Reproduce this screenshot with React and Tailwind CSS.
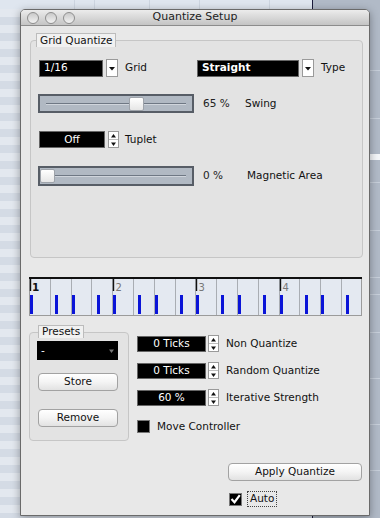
import React from "react";

const font = "font-['DejaVu_Sans','Liberation_Sans',sans-serif]";

function DropBtn() {
  return (
    <div className="w-[12px] h-[18px] bg-white border border-[#9a9a9a] flex items-center justify-center">
      <svg width="6" height="5" viewBox="0 0 6 5"><path d="M0 1h6L3 4.5z" fill="#111" /></svg>
    </div>
  );
}

function Spinner({ h = "h-[17px]" }) {
  return (
    <div className={`w-[11px] ${h} bg-white border border-[#9a9a9a] flex flex-col`}>
      <div className="flex-1 flex items-center justify-center border-b border-[#bdbdbd]">
        <svg width="5" height="4" viewBox="0 0 5 4"><path d="M0 3.5h5L2.5 0z" fill="#111" /></svg>
      </div>
      <div className="flex-1 flex items-center justify-center">
        <svg width="5" height="4" viewBox="0 0 5 4"><path d="M0 0.5h5L2.5 4z" fill="#111" /></svg>
      </div>
    </div>
  );
}

function Slider({ pos, h = "h-[19px]" }) {
  return (
    <div className={`relative w-[156px] ${h} bg-[#b1b9c3] border-2 border-[#575d66] flex items-center`}>
      <div className="mx-[6px] flex-1 h-[2px] border-t border-[#6f7884] border-b border-b-[#d0d5dc]" />
      <div
        className="absolute top-[1px] w-[15px] h-[14px] bg-gradient-to-b from-[#ffffff] to-[#e6e6e6] border border-[#9ea3aa] rounded-[2px]"
        style={{ left: pos }}
      />
    </div>
  );
}

function Field({ w, children, className = "" }) {
  return (
    <div className={`${w} h-[17px] bg-black border border-[#666] text-white text-[10.5px] flex items-center ${className}`}>
      {children}
    </div>
  );
}

function Timeline() {
  const W = 333;
  const step = 20.8;
  const lines = [];
  for (let i = 1; i < 16; i++) {
    const x = Math.round(i * step) + 0.5;
    lines.push(<line key={"g" + i} x1={x} x2={x} y1={1} y2={38} stroke="#a9adb3" strokeWidth="1" />);
  }
  const beats = [0, 4, 8, 12].map((i) => Math.round(i * step) + 1.5);
  const bars = [];
  for (let k = 0; k < 8; k++) {
    const e = Math.round(k * 41.6) + 1;
    bars.push(<rect key={"e" + k} x={e} y={18} width={3} height={19} fill="#0a14d8" />);
    bars.push(<rect key={"o" + k} x={e + 25} y={18} width={3} height={19} fill="#0a14d8" />);
  }
  return (
    <svg width={W} height={39} viewBox={`0 0 ${W} 39`} className="block">
      <rect x="0.5" y="0.5" width={W - 1} height="38" fill="#e4e9f1" stroke="#9b9b9b" />
      {lines}
      <line x1="0" x2={W} y1="1" y2="1" stroke="#111" strokeWidth="2" />
      {beats.map((x, i) => (
        <line key={"b" + i} x1={x} x2={x} y1={0} y2={14} stroke="#111" strokeWidth="1.4" />
      ))}
      <text x="3" y="14" fontSize="10.5" fontWeight="bold" fill="#111" fontFamily="DejaVu Sans">1</text>
      {[2, 3, 4].map((n, i) => (
        <text key={n} x={beats[i + 1] + 2} y="14" fontSize="10" fill="#777" fontFamily="DejaVu Sans">{n}</text>
      ))}
      {bars}
    </svg>
  );
}

function MacButton({ w, children }) {
  return (
    <div className={`${w} h-[18px] rounded-[4px] border border-[#a2a2a2] bg-gradient-to-b from-[#ffffff] via-[#f4f4f4] to-[#e2e2e2] flex items-center justify-center text-[10.5px] text-[#111]`}>
      {children}
    </div>
  );
}

function SpinRow({ value, label }) {
  return (
    <div className="flex items-center h-[17px]">
      <div className="w-[69px] h-[16px] bg-black border border-[#666] text-white text-[10.5px] flex items-center justify-center">{value}</div>
      <div className="ml-[2px]"><Spinner h="h-[17px]" /></div>
      <div className="ml-[7px] text-[10.5px] text-[#111]">{label}</div>
    </div>
  );
}

export default function App() {
  const rightLines = [70, 118, 182, 230, 277, 294, 332, 378, 424, 470];
  return (
    <div className={`relative w-[380px] h-[518px] overflow-hidden ${font}`}>
      {/* desktop background */}
      <div className="absolute inset-0 flex">
        <div className="w-[313px] h-full border-r border-[#1c1c3c] flex flex-col">
          <div className="h-[9px] bg-[#dfe6ef] flex">
            <div className="w-[75px] border-r border-[#cdd5e0]" />
            <div className="w-[20px] border-r border-[#cdd5e0]" />
            <div className="w-[55px] border-r border-[#cdd5e0]" />
            <div className="w-[50px] border-r border-[#cdd5e0]" />
            <div className="w-[70px] border-r border-[#cdd5e0]" />
          </div>
          <div className="flex-1 bg-[repeating-linear-gradient(180deg,#e3e8ef_0px,#e3e8ef_8px,#d4dbe5_8px,#d4dbe5_16px)]" />
        </div>
        <div className="flex-1 h-full bg-[#b1bac7] relative">
          <div className="absolute left-0 right-0 top-[154px] h-[6px] bg-[#f4f6f9]" />
          {rightLines.map((y) => (
            <div key={y} className="absolute left-0 right-0 h-px bg-[#c7cfda]" style={{ top: y }} />
          ))}
        </div>
      </div>

      {/* window */}
      <div className="absolute left-[20px] top-[9px] w-[350px] h-[507px] border border-[#6a6a6a] rounded-t-[5px] bg-[#e8e8e8] shadow-[0_2px_8px_rgba(0,0,0,0.35)] flex flex-col text-[#111]">
        {/* title bar */}
        <div className="relative h-[16px] rounded-t-[4px] bg-gradient-to-b from-[#ececec] to-[#c4c4c4] border-b border-[#8c8c8c] flex items-center">
          <div className="flex items-center gap-[6px] pl-[6px]">
            {[0, 1, 2].map((i) => (
              <div key={i} className="w-[12px] h-[12px] rounded-full border border-[#8e8e8e] bg-gradient-to-b from-[#c9c9c9] to-[#f2f2f2]" />
            ))}
          </div>
          <div className="absolute inset-0 flex items-center justify-center text-[11px] text-[#222]">Quantize Setup</div>
        </div>

        {/* Grid Quantize group */}
        <div className="relative ml-[9px] mt-[14px] w-[333px] h-[218px] border border-[#c6c6c6] rounded-[4px] bg-[#e3e3e3] pl-[8px] pt-[18px]">
          <div className="absolute -top-[8px] left-[5px] px-[3px] h-[14px] bg-[#f1f1f1] border border-[#bcbcbc] border-b-0 flex items-center text-[10.5px]">
            Grid Quantize
          </div>
          {/* row 1 */}
          <div className="flex items-center h-[18px]">
            <div className="w-[158px] flex items-center">
              <Field w="w-[64px]" className="pl-[4px]">1/16</Field>
              <div className="ml-[3px]"><DropBtn /></div>
              <div className="ml-[7px] text-[10.5px]">Grid</div>
            </div>
            <Field w="w-[102px]" className="pl-[4px] font-bold">Straight</Field>
            <div className="ml-[3px]"><DropBtn /></div>
            <div className="ml-[7px] text-[10.5px]">Type</div>
          </div>
          {/* row 2 */}
          <div className="flex items-center mt-[17px] -ml-[1px]">
            <Slider pos={89} />
            <div className="ml-[9px] w-[42px] text-[10.5px] text-[#222]">65 %</div>
            <div className="text-[10.5px]">Swing</div>
          </div>
          {/* row 3 */}
          <div className="flex items-center mt-[18px]">
            <Field w="w-[66px]" className="justify-center">Off</Field>
            <div className="ml-[3px]"><Spinner /></div>
            <div className="ml-[6px] text-[10.5px]">Tuplet</div>
          </div>
          {/* row 4 */}
          <div className="flex items-center mt-[18px] -ml-[1px]">
            <Slider pos={0} h="h-[20px]" />
            <div className="ml-[9px] w-[44px] text-[10.5px] text-[#222]">0 %</div>
            <div className="text-[10.5px]">Magnetic Area</div>
          </div>
        </div>

        {/* timeline */}
        <div className="ml-[8px] mt-[19px]">
          <Timeline />
        </div>

        {/* presets + controls */}
        <div className="flex items-start mt-[16px] ml-[8px]">
          <div className="relative w-[100px] h-[109px] border border-[#c6c6c6] rounded-[4px] bg-[#e3e3e3] pl-[7px] pt-[8px]">
            <div className="absolute -top-[8px] left-[8px] px-[3px] h-[13px] bg-[#f1f1f1] border border-[#bcbcbc] border-b-0 flex items-center text-[10.5px]">
              Presets
            </div>
            <div className="w-[81px] h-[19px] bg-black flex items-center justify-between px-[4px]">
              <span className="text-white text-[10.5px] leading-none">-</span>
              <svg width="5" height="4" viewBox="0 0 5 4"><path d="M0 0.5h5L2.5 4z" fill="#777" /></svg>
            </div>
            <div className="mt-[13px] ml-[1px]"><MacButton w="w-[80px]">Store</MacButton></div>
            <div className="mt-[18px] ml-[1px]"><MacButton w="w-[80px]">Remove</MacButton></div>
          </div>
          <div className="ml-[8px] mt-[3px] flex flex-col gap-[10px]">
            <SpinRow value="0 Ticks" label="Non Quantize" />
            <SpinRow value="0 Ticks" label="Random Quantize" />
            <SpinRow value="60 %" label="Iterative Strength" />
            <div className="flex items-center mt-[3px]">
              <div className="w-[13px] h-[13px] bg-black border border-[#777]" />
              <div className="ml-[7px] text-[10.5px]">Move Controller</div>
            </div>
          </div>
        </div>

        {/* apply */}
        <div className="ml-[207px] mt-[22px]">
          <MacButton w="w-[134px]">Apply Quantize</MacButton>
          <div className="flex items-center mt-[10px] ml-[1px]">
            <div className="w-[13px] h-[13px] bg-black border border-[#777] flex items-center justify-center">
              <svg width="11" height="10" viewBox="0 0 11 10"><path d="M1.5 5l3 3.2L9.8 1.2" stroke="#fff" strokeWidth="2.2" fill="none" /></svg>
            </div>
            <div className="ml-[5px] px-[2px] h-[16px] border border-dotted border-[#444] flex items-center text-[10.5px]">Auto</div>
          </div>
        </div>
      </div>
    </div>
  );
}
